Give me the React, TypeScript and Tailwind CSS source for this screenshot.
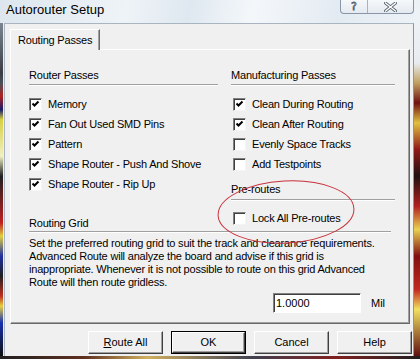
import React from 'react';

const ui = "font-['Liberation_Sans',Arial,sans-serif] text-[11px] leading-[13px] text-black";

function CheckBox({ checked }: { checked: boolean }) {
    return (
        <div className="h-[13px] w-[13px] shrink-0 border border-t-[#808080] border-l-[#808080] border-b-[#f4f4f4] border-r-[#f4f4f4] bg-white shadow-[inset_1px_1px_0_#404040]">
            {checked && (
                <svg width="11" height="11" viewBox="0 0 11 11" className="block">
                    <path d="M2.5 4.5 L4.5 6.5 L8.5 2.5" fill="none" stroke="#000" strokeWidth="2" />
                </svg>
            )}
        </div>
    );
}

function CheckRow({ label, checked }: { label: string; checked: boolean }) {
    return (
        <div className="flex h-[20px] items-center gap-[6px]">
            <CheckBox checked={checked} />
            <span className="tracking-[-0.2px]">{label}</span>
        </div>
    );
}

function Heading({ text, width, gap = 'mt-[2px]' }: { text: string; width: string; gap?: string }) {
    return (
        <>
            <div className="h-[13px] tracking-[-0.2px]">{text}</div>
            <div className={`${gap} h-[2px] border-t border-t-[#a0a0a0] border-b border-b-white ${width}`} />
        </>
    );
}

function Btn({ children, isDefault }: { children: React.ReactNode; isDefault?: boolean }) {
    const face = 'flex h-full w-full items-center justify-center border border-t-white border-l-white border-b-[#404040] border-r-[#404040] bg-[#f0f0f0] shadow-[inset_-1px_-1px_0_#a0a0a0]';
    return (
        <div className={`h-[23px] w-[75px] ${isDefault ? 'border border-black' : ''}`}>
            <div className={face}>{children}</div>
        </div>
    );
}

export default function App() {
    return (
        <div className={`relative flex h-[359px] w-[420px] flex-col overflow-hidden bg-[#dfe7ef] ${ui}`}>
            {/* title bar */}
            <div className="flex h-[23px] shrink-0 bg-[linear-gradient(100deg,#dde6ee_0%,#eef3f7_30%,#dfe8f0_45%,#f4f7fa_60%,#e3ebf2_80%,#edf2f6_100%)]">
                <div className="pl-[6px] pt-[3px] font-['Liberation_Sans',Arial,sans-serif] text-[13px] leading-[13px] text-black">
                    Autorouter Setup
                </div>
                <div className="ml-auto mr-[6px] flex h-[14px] overflow-hidden rounded-b-[4px] border border-t-0 border-[#8896a8] bg-[linear-gradient(to_bottom,#f6f8fa,#e4eaf0)]">
                    <div className="flex w-[27px] items-center justify-center border-r border-r-[#a6b2c0]">
                        <span className="font-['DejaVu_Sans',sans-serif] text-[11px] leading-[11px] text-white [-webkit-text-stroke:0.8px_#55606c]">?</span>
                    </div>
                    <div className="flex w-[45px] items-center justify-center">
                        <svg width="13" height="10" viewBox="0 0 13 10">
                            <path d="M1.5 1 L11.5 9 M11.5 1 L1.5 9" stroke="#55606c" strokeWidth="3" strokeLinecap="square" />
                            <path d="M1.5 1 L11.5 9 M11.5 1 L1.5 9" stroke="#fff" strokeWidth="1.4" strokeLinecap="square" />
                        </svg>
                    </div>
                </div>
            </div>

            <div className="flex h-[333px] shrink-0">
                {/* desktop edge left */}
                <div className="w-[3px] bg-[linear-gradient(to_bottom,#7c8590_0%,#3a3e44_15%,#4a4f58_18%,#b02020_22%,#1a1a6a_26%,#d8d040_29%,#f0f0c0_40%,#202020_46%,#c02020_60%,#e0d040_64%,#2030a0_70%,#202020_76%,#c03020_82%,#e8d040_85%,#1830b0_90%,#101010_100%)]" />
                <div className="w-[1px] bg-[#e8eef4]" />
                {/* client area */}
                <div className="flex w-[410px] flex-col border-t border-l border-r border-t-[#a8b4c0] border-l-[#a8b4c0] border-r-[#8a96a4] bg-[#f0f0f0] pl-[5px] pt-[5px]">
                    {/* tab */}
                    <div className="relative z-10 flex h-[21px] w-[90px] items-center border-t border-l border-r border-t-white border-l-white border-r-[#696969] bg-[#f0f0f0] pl-[7px] tracking-[-0.2px] shadow-[inset_-1px_0_0_#a0a0a0]">
                        Routing Passes
                    </div>
                    {/* panel */}
                    <div className="-mt-[1px] flex h-[275px] w-[400px] flex-col border border-t-white border-l-white border-b-[#696969] border-r-[#696969] pl-[18px] shadow-[inset_-1px_-1px_0_#a0a0a0]">
                        <div className="flex">
                            <div className="w-[202px] pt-[19px]">
                                <Heading text="Router Passes" width="w-[189px]" />
                                <div className="mt-[8px]">
                                    <CheckRow label="Memory" checked />
                                    <CheckRow label="Fan Out Used SMD Pins" checked />
                                    <CheckRow label="Pattern" checked />
                                    <CheckRow label="Shape Router - Push And Shove" checked />
                                    <CheckRow label="Shape Router - Rip Up" checked />
                                </div>
                            </div>
                            <div className="w-[164px] pt-[19px]">
                                <Heading text="Manufacturing Passes" width="w-[164px]" />
                                <div className="mt-[8px] pl-[2px]">
                                    <CheckRow label="Clean During Routing" checked />
                                    <CheckRow label="Clean After Routing" checked />
                                    <CheckRow label="Evenly Space Tracks" checked={false} />
                                    <CheckRow label="Add Testpoints" checked={false} />
                                </div>
                                <div className="mt-[9px]">
                                    <Heading text="Pre-routes" width="w-[164px]" gap="mt-[3px]" />
                                </div>
                            </div>
                        </div>
                        <div className="mt-[7px] flex h-[22px]">
                            <div className="w-[202px] self-end tracking-[-0.2px]">Routing Grid</div>
                            <div className="pl-[2px]">
                                <CheckRow label="Lock All Pre-routes" checked={false} />
                            </div>
                        </div>
                        <div className="mt-[1px] h-[2px] w-[362px] border-t border-t-[#a0a0a0] border-b border-b-white" />
                        <p className="mt-[4px] w-[350px] tracking-[-0.2px]">
                            Set the preferred routing grid to suit the track and clearance requirements. Advanced Route will analyze the board and advise if this grid is inappropriate. Whenever it is not possible to route on this grid Advanced Route will then route gridless.
                        </p>
                        <div className="mt-[4px] flex items-center pl-[244px]">
                            <div className="flex h-[20px] w-[88px] items-center border border-t-[#808080] border-l-[#808080] border-b-white border-r-white bg-white pl-[2px] shadow-[inset_1px_1px_0_#404040]">
                                1.0000
                            </div>
                            <span className="ml-[10px]">Mil</span>
                        </div>
                    </div>
                    {/* buttons */}
                    <div className="mt-[7px] flex gap-[8px] pl-[78px]">
                        <Btn>
                            <span><span className="underline">R</span>oute All</span>
                        </Btn>
                        <Btn isDefault>OK</Btn>
                        <Btn>Cancel</Btn>
                        <Btn>Help</Btn>
                    </div>
                </div>
                {/* desktop edge right */}
                <div className="w-[6px] bg-[linear-gradient(to_bottom,#eef2f6_0%,#e8ecf0_12%,#c0a060_18%,#701010_24%,#e0c040_30%,#901818_38%,#201010_46%,#b02020_55%,#e8d050_62%,#801010_70%,#c02820_80%,#f0e060_86%,#601010_100%)]" />
            </div>
            <div className="h-[3px] shrink-0 bg-[linear-gradient(to_right,#202020,#603020_20%,#d0b060_35%,#404050_60%,#802020_80%,#202020)]" />

            {/* red annotation ellipse */}
            <svg className="pointer-events-none absolute left-[214px] top-[177px]" width="144" height="70" viewBox="0 0 144 70">
                <ellipse cx="72" cy="35" rx="68" ry="31" fill="none" stroke="#c8303a" strokeWidth="1" transform="rotate(-3 72 35)" />
            </svg>
        </div>
    );
}
